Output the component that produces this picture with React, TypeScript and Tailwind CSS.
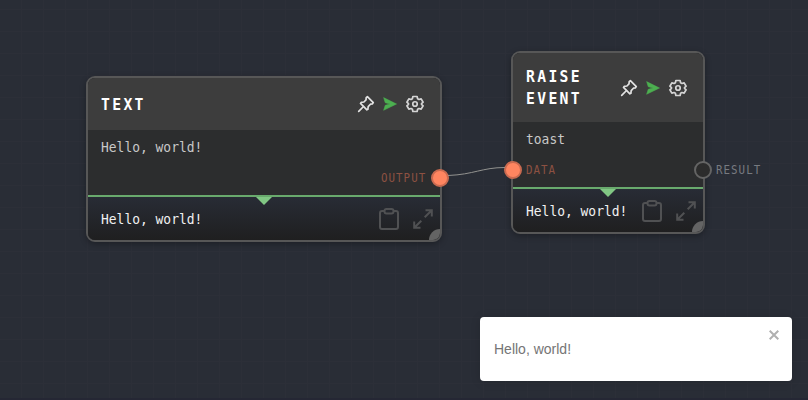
import React from "react";

const mono = "font-['DejaVu_Sans_Mono','Liberation_Mono',monospace]";
const portLabel = "absolute origin-left scale-x-90 text-[12px] leading-4 tracking-[1.15px]";
const valueText = "block origin-left scale-x-[0.925] text-[14px] leading-5 whitespace-nowrap";

function PinIcon() {
  return (
    <svg className="block size-[18px]" viewBox="0 0 18 18" fill="none" stroke="#e2e2e2" strokeWidth="1.7" strokeLinejoin="round" strokeLinecap="round">
      <path d="M10.400 1.700 16.300 7.600 15.300 9 13.400 9.200 11.200 11.600 10.900 14.300 9.900 14.800 3.500 8.400 4.200 7.400 6.900 7 9 4.900 9.200 2.700Z" />
      <path d="M6.500 11.500 1.700 16.300" />
    </svg>
  );
}

function RunIcon() {
  return (
    <svg className="block h-[14px] w-[14px]" viewBox="0 0 14 14">
      <path d="M0.600 0.600 13.600 7 0.600 13.300 2.200 8.300 6.800 7 2.200 5.700Z" fill="#4caf50" stroke="#4caf50" strokeWidth="0.500" />
    </svg>
  );
}

function GearIcon() {
  return (
    <svg className="block size-[18px]" viewBox="0 0 24 24" fill="none" stroke="#d4d4d4" strokeWidth="2.300" strokeLinejoin="round">
      <path d="M9.200 2h5.600l.7 3 1.700 1 3-.9 2.600 4.500-2.100 2v.8l2.100 2-2.600 4.500-3-.9-1.700 1-.7 3H9.200l-.7-3-1.700-1-3 .9-2.600-4.500 2.100-2v-.8l-2.100-2 2.600-4.500 3 .9 1.700-1Z" />
      <circle cx="12" cy="12" r="3" />
    </svg>
  );
}

function ClipboardIcon() {
  return (
    <svg className="block h-[22px] w-5" viewBox="0 0 20 22" fill="none" stroke="#505153" strokeWidth="2" strokeLinejoin="round">
      <path d="M5.500 3H3a2 2 0 0 0-2 2v14a2 2 0 0 0 2 2h14a2 2 0 0 0 2-2V5a2 2 0 0 0-2-2h-2.500" />
      <rect x="5.500" y="1" width="9" height="4.500" rx="2" />
    </svg>
  );
}

function ExpandIcon() {
  return (
    <svg className="block size-5" viewBox="0 0 20 20" fill="none" stroke="#505153" strokeWidth="2">
      <path d="M12.500 1.200H18.800V7.500M18.500 1.500 11.700 8.300M7.500 18.800H1.200V12.500M1.500 18.500 8.300 11.700" />
    </svg>
  );
}

function Port({ place, on }: { place: string; on: boolean }) {
  return (
    <span className={`absolute size-[18px] rounded-full border-2 ${place} ${on ? "border-[#c96a50] bg-[#ff8560]" : "border-[#646464] bg-[#2c2c2c]"}`} />
  );
}

type NodeProps = {
  frame: string;
  header: string;
  titlePlace: string;
  title: React.ReactNode;
  value: string;
  ports: React.ReactNode;
};

function Node({ frame, header, titlePlace, title, value, ports }: NodeProps) {
  return (
    <section className={`absolute rounded-[9px] border-2 border-[#575757] shadow-[0_2px_6px_rgba(0,0,0,0.3)] ${frame} ${mono}`}>
      <div className="flex h-full flex-col overflow-hidden rounded-[7px] bg-[#2c2d2e]">
        <header className={`flex shrink-0 items-center justify-between bg-[#3d3d3d] pl-[13px] pr-4 ${header}`}>
          <h2 className={`origin-left scale-x-[0.92] text-[16px] leading-[22px] font-bold tracking-[2.55px] text-white ${titlePlace}`}>{title}</h2>
          <div className="flex shrink-0 items-center">
            <PinIcon />
            <span className="mr-[9px] ml-2"><RunIcon /></span>
            <GearIcon />
          </div>
        </header>
        <div className="h-[65px] shrink-0 pt-[7px] pl-[13px] text-[#c8c8c8]">
          <span className={valueText}>{value}</span>
        </div>
        <div className="relative flex flex-1 items-center justify-between border-t-2 border-[#69aa6d] bg-linear-to-b from-[#282c35] to-[#1f1f20] pl-[13px] pr-[7.500px]">
          <svg className="absolute top-0 left-1/2 -ml-2 h-2 w-4" viewBox="0 0 16 8"><path d="M0 0H16L8 8Z" fill="#81c784" /></svg>
          <p className="w-[102px] text-[#f1f1f1]"><span className={valueText}>Hello, world!</span></p>
          <div className="flex shrink-0 items-center gap-[14px] pt-px">
            <ClipboardIcon />
            <ExpandIcon />
          </div>
          <span className="absolute -right-[11px] -bottom-[11px] size-[22px] rounded-full bg-[#646464]" />
        </div>
      </div>
      {ports}
    </section>
  );
}

export default function App() {
  return (
    <main className="relative h-[400px] w-[808px] overflow-hidden bg-[#292d36] bg-[linear-gradient(to_right,#2c2f38_1px,transparent_1px),linear-gradient(to_bottom,#2c2f38_1px,transparent_1px)] bg-size-[22px_22px] bg-position-[21px_9px]">
      <Node
        frame="left-[86px] top-[76px] h-[166px] w-[356px]"
        header="h-[52px]"
        titlePlace="pt-0.5"
        title="TEXT"
        value="Hello, world!"
        ports={
          <>
            <span className={`${portLabel} top-[92px] left-[293px] text-[#8c5142]`}>OUTPUT</span>
            <Port on place="top-[90.500px] -right-[9px]" />
          </>
        }
      />
      <Node
        frame="left-[511px] top-[51px] h-[183px] w-[194px]"
        header="h-[69px]"
        titlePlace="pt-px"
        title={<>RAISE<br />EVENT</>}
        value="toast"
        ports={
          <>
            <Port on place="top-[107.500px] -left-[9px]" />
            <span className={`${portLabel} top-[109px] left-[13px] text-[#8c5142]`}>DATA</span>
            <Port on={false} place="top-[107.500px] -right-[9px]" />
            <span className={`${portLabel} top-[109px] left-[203px] text-[#777a80]`}>RESULT</span>
          </>
        }
      />
      <svg className="absolute top-0 left-0 h-full w-full" viewBox="0 0 808 400" fill="none">
        <path d="M448 175.500C474 174.500 482 167.500 505 167.500" stroke="#92928f" strokeWidth="1" />
      </svg>
      <aside className="absolute top-[317px] left-[480px] flex h-16 w-[312px] items-center rounded-[4px] bg-white pl-[14px] font-['Liberation_Sans',Arial,sans-serif] text-sm text-[#757575] shadow-[0_1px_10px_rgba(0,0,0,0.15)]">
        Hello, world!
        <svg className="absolute top-[13px] right-[13px] size-[10px]" viewBox="0 0 10 10" fill="none" stroke="#b0b0b0" strokeWidth="2"><path d="m.7.7 8.600 8.600M9.300.7.7 9.300" /></svg>
      </aside>
      <div className="absolute inset-x-0 bottom-0 h-0.5 bg-[#252734]" />
    </main>
  );
}
